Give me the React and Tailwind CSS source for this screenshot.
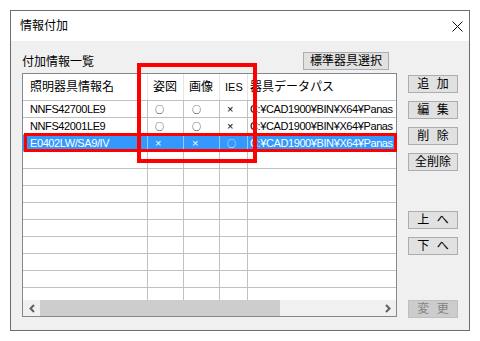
import React from "react"

const rows = [
  { name: "NNFS42700LE9", fig: "○", img: "○", ies: "×", path: "C:¥CAD1900¥BIN¥X64¥Panas" },
  { name: "NNFS42001LE9", fig: "○", img: "○", ies: "×", path: "C:¥CAD1900¥BIN¥X64¥Panas" },
  { name: "E0402LW/SA9/IV", fig: "×", img: "×", ies: "○", path: "C:¥CAD1900¥BIN¥X64¥Panas", selected: true },
]
const empty = Array.from({ length: 9 }, (_, i) => ({ key: "e" + i }))

function Mark({ v }) {
  if (!v) return null
  return v === "○"
    ? <span className="font-['Noto_Sans_CJK_JP',sans-serif] text-[9px] leading-none">○</span>
    : <span className="text-[11px] leading-none">×</span>
}

function Btn({ children, disabled, className = "" }) {
  return (
    <div className={`h-[18px] flex items-center justify-center border text-[12px] leading-none whitespace-pre ${
      disabled ? "bg-[#cccccc] border-[#bfbfbf] text-[#838383]" : "bg-[#e1e1e1] border-[#adadad] text-black"
    } ${className}`}>{children}</div>
  )
}

function Row({ r }) {
  const sel = r.selected
  const line = sel ? "border-[#9cc9f6]" : "border-[#c0c0c0]"
  const cell = `h-full flex items-center border-r ${line} pl-[7px] overflow-hidden whitespace-nowrap`
  return (
    <div className={`grid grid-cols-[125px_36px_36px_28px_1fr] h-[17px] border-b border-[#c0c0c0] text-[11px] tracking-[-0.4px] ${
      sel ? "bg-[#3399ff] text-white" : "text-black"
    }`}>
      <div className={cell}>{r.name}</div>
      <div className={cell}><Mark v={r.fig} /></div>
      <div className={`${cell} pl-[8px]`}><Mark v={r.img} /></div>
      <div className={cell}><Mark v={r.ies} /></div>
      <div className="h-full flex items-center pl-[2px] overflow-hidden whitespace-nowrap">{r.path}</div>
    </div>
  )
}

function Chevron({ dir }) {
  return (
    <svg width="6" height="9" viewBox="0 0 6 9">
      <path d={dir === "left" ? "M5 1 L1.5 4.5 L5 8" : "M1 1 L4.5 4.5 L1 8"} fill="none" stroke="#606060" strokeWidth="2" />
    </svg>
  )
}

export default function App() {
  return (
    <div className="w-[480px] h-[341px] bg-white p-[10px] font-['Liberation_Sans','Noto_Sans_CJK_JP',sans-serif]">
      <div className="relative w-[460px] h-[321px] border border-[#6e6e6e] bg-[#f0f0f0] flex flex-col">
        {/* Title bar */}
        <div className="h-[30px] bg-white flex items-center justify-between pl-[9px] pr-[6px]">
          <span className="text-[12px] leading-none text-black">情報付加</span>
          <svg width="11" height="11" viewBox="0 0 11 11">
            <path d="M0.5 0.5 L10.5 10.5 M10.5 0.5 L0.5 10.5" stroke="#111" strokeWidth="1" />
          </svg>
        </div>

        {/* Body */}
        <div className="flex pl-[11px]">
          <div className="w-[375px] flex flex-col">
            <div className="h-[32px] flex items-start">
              <span className="mt-[15px] text-[12px] leading-none text-black">付加情報一覧</span>
              <Btn className="ml-auto mr-[8px] mt-[11px] w-[86px]">標準器具選択</Btn>
            </div>

            {/* List view */}
            <div className="relative h-[244px] border border-[#828790] bg-white flex flex-col">
              <div className="h-[226px] overflow-hidden">
                <div className="grid grid-cols-[125px_36px_36px_28px_1fr] h-[27px] border-b border-[#c0c0c0] text-[12px] text-black">
                  <div className="flex items-center border-r border-[#e5e5e5] pl-[7px]">照明器具情報名</div>
                  <div className="flex items-center border-r border-[#e5e5e5] pl-[5px]">姿図</div>
                  <div className="flex items-center border-r border-[#e5e5e5] pl-[5px]">画像</div>
                  <div className="flex items-center border-r border-[#e5e5e5] pl-[5px] text-[11px]">IES</div>
                  <div className="flex items-center pl-[2px] whitespace-nowrap overflow-hidden">器具データパス</div>
                </div>
                {rows.map(r => <Row key={r.name} r={r} />)}
                {empty.map(r => <Row key={r.key} r={r} />)}
              </div>

              {/* Horizontal scrollbar */}
              <div className="h-[16px] flex bg-[#f0f0f0]">
                <div className="w-[17px] flex items-center justify-center"><Chevron dir="left" /></div>
                <div className="w-[240px] bg-[#cdcdcd]" />
                <div className="flex-1" />
                <div className="w-[17px] flex items-center justify-center"><Chevron dir="right" /></div>
              </div>

              {/* Highlight boxes */}
              <div className="absolute left-[114px] top-[-11px] w-[120px] h-[100px] border-[4px] border-[#ff0000]" />
              <div className="absolute left-[1px] top-[59px] w-[373px] h-[19px] border-[3px] border-[#ff0000]" />
            </div>
          </div>

          {/* Right buttons */}
          <div className="w-[50px] ml-[11px] pt-[34px] flex flex-col">
            <Btn className="tracking-[2px] pl-[2px]">追 加</Btn>
            <Btn className="mt-[8px] tracking-[2px] pl-[2px]">編 集</Btn>
            <Btn className="mt-[8px] tracking-[2px] pl-[2px]">削 除</Btn>
            <Btn className="mt-[8px]">全削除</Btn>
            <Btn className="mt-[40px] tracking-[2px] pl-[2px]">上 へ</Btn>
            <Btn className="mt-[8px] tracking-[2px] pl-[2px]">下 へ</Btn>
            <Btn disabled className="mt-[45px] tracking-[2px] pl-[2px]">変 更</Btn>
          </div>
        </div>
      </div>
    </div>
  )
}
